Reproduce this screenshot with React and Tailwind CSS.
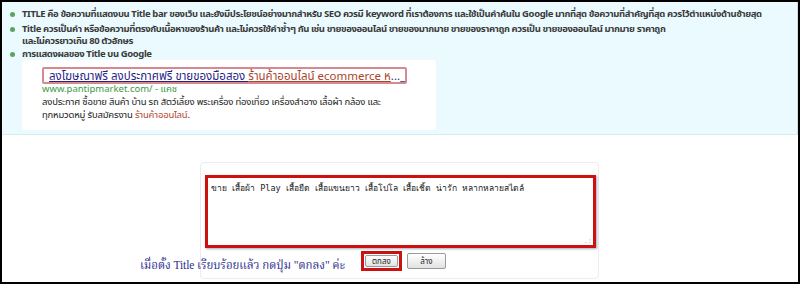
export default function App() {
  const bullet = (
    <span className="mt-[4px] mr-[7px] h-[5px] w-[5px] shrink-0 rounded-full bg-[#5aa55e]" />
  );
  return (
    <div className="w-[800px] h-[284px] border-2 border-black bg-white flex flex-col overflow-hidden font-['Noto_Sans','Noto_Sans_Thai',sans-serif]">
      <div className="h-[133px] shrink-0 bg-[#eafafe] border-b border-[#d3ecf3] border-r border-r-[#c9dfe6] pl-[8px] pt-[6px] text-[9.5px] tracking-[-0.4px] font-bold text-[#3a3a3a] leading-[12px] whitespace-nowrap">
        <div className="flex items-start">
          {bullet}
          <span>TITLE คือ ข้อความที่แสดงบน Title bar ของเว็บ และยังมีประโยชน์อย่างมากสำหรับ SEO ควรมี keyword ที่เราต้องการ และใช้เป็นคำค้นใน Google มากที่สุด ข้อความที่สำคัญที่สุด ควรไว้ตำแหน่งด้านซ้ายสุด</span>
        </div>
        <div className="flex items-start mt-[3px]">
          {bullet}
          <span>Title ควรเป็นคำ หรือข้อความที่ตรงกับเนื้อหาของร้านค้า และไม่ควรใช้คำซ้ำๆ กัน เช่น ขายของออนไลน์ ขายของมากมาย ขายของราคาถูก ควรเป็น ขายของออนไลน์ มากมาย ราคาถูก<br />และไม่ควรยาวเกิน 80 ตัวอักษร</span>
        </div>
        <div className="flex items-start mt-[1px]">
          {bullet}
          <span>การแสดงผลของ Title บน Google</span>
        </div>
        <div className="ml-[12px] mt-[0px] w-[414px] h-[70px] bg-white rounded-[3px] pl-[20px] pt-[7px] font-normal tracking-normal">
          <div className="w-[365px] h-[17px] border-2 border-[#d58a92] rounded-[2px] px-[5px] text-[11.5px] leading-[13px] whitespace-nowrap overflow-hidden">
            <span className="underline text-[#2a1f86]">ลงโฆษณาฟรี ลงประกาศฟรี ขายของมือสอง </span>
            <span className="underline text-[#a8472c]">ร้านค้าออนไลน์ ecommerce ห</span>
            <span className="text-[#2a1f86]">..._</span>
          </div>
          <div className="text-[9.5px] leading-[13px] text-[#3a9a3f] -mt-[2px]">www.pantipmarket.com/ - แคช</div>
          <div className="text-[9.5px] tracking-[-0.2px] leading-[13px] text-[#222]">ลงประกาศ ซื้อขาย สินค้า บ้าน รถ สัตว์เลี้ยง พระเครื่อง ท่องเที่ยว เครื่องสำอาง เสื้อผ้า กล้อง และ</div>
          <div className="text-[9.5px] tracking-[-0.2px] leading-[13px] text-[#222]">ทุกหมวดหมู่ รับสมัครงาน <span className="text-[#b24a30]">ร้านค้าออนไลน์</span>.</div>
        </div>
      </div>
      <div className="pl-[198px] pt-[27px]">
        <div className="w-[399px] h-[117px] rounded-[4px] border border-[#ececec] pl-[4px] pt-[12px]">
          <div className="w-[391px] h-[73px] border-[3px] border-[#cc1111] shadow-[1px_1px_2px_rgba(80,80,120,0.5)] bg-white px-[3px] pt-[4px] font-['DejaVu_Sans_Mono',monospace] text-[8.5px] leading-[12px] text-[#222] relative">
            ขาย เสื้อผ้า Play เสื้อยืด เสื้อแขนยาว เสื้อโปโล เสื้อเชิ้ต น่ารัก หลากหลายสไตล์
            <span className="absolute right-[1px] bottom-[0px] text-[7px] leading-[7px] text-[#bbb]">.:</span>
          </div>
          <div className="flex items-center mt-[0px]">
            <span className="ml-[-65px] mr-[16px] mt-[9px] font-['Liberation_Serif','Noto_Serif_Thai',serif] text-[11.5px] tracking-[-0.1px] text-[#2b2e8f] whitespace-nowrap">เมื่อตั้ง Title เรียบร้อยแล้ว กดปุ่ม "ตกลง" ค่ะ</span>
            <div className="border-[3px] border-[#cc1111] p-[1px]">
              <div className="w-[33px] h-[12px] border border-[#9a9a9a] rounded-[2px] bg-gradient-to-b from-white to-[#e2e2e2] text-[8px] leading-[10px] text-center text-[#222]">ตกลง</div>
            </div>
            <div className="ml-[5px] w-[39px] h-[16px] border border-[#9a9a9a] rounded-[2px] bg-gradient-to-b from-white to-[#e2e2e2] text-[8px] leading-[14px] text-center text-[#222]">ล้าง</div>
          </div>
        </div>
      </div>
    </div>
  );
}
